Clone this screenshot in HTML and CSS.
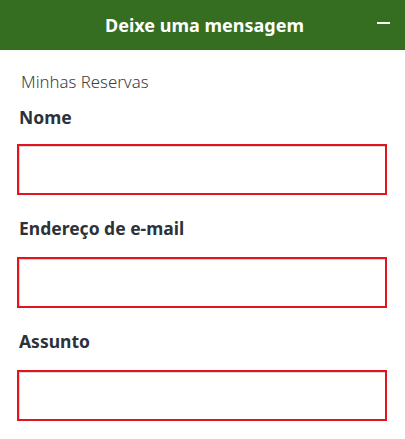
FILE: index.html
```html
<!DOCTYPE html>
<html lang="pt">
<head>
<meta charset="utf-8">
<link rel="stylesheet" href="styles.css">
</head>
<body>
<div class="widget">
  <header class="head">
    <span class="title">Deixe uma mensagem</span>
    <span class="toggle" aria-label="Minimizar"></span>
  </header>
  <form class="form">
    <p class="sub">Minhas Reservas</p>
    <label class="field">
      <span class="lbl">Nome</span>
      <input class="inp" type="text">
    </label>
    <label class="field">
      <span class="lbl">Endereço de e-mail</span>
      <input class="inp" type="email">
    </label>
    <label class="field">
      <span class="lbl">Assunto</span>
      <input class="inp" type="text">
    </label>
  </form>
</div>
</body>
</html>
```

FILE: styles.css
```css
* { box-sizing: border-box; }
html, body { margin: 0; padding: 0; background: #fff; }
body { font-family: "Segoe UI", "Noto Sans", "Open Sans", sans-serif; overflow: hidden; }
.widget { width: 405px; }
.head {
  height: 50px;
  background: #366e21;
  display: flex;
  align-items: center;
  justify-content: center;
  position: relative;
}
.title { color: #fff; font-weight: 700; font-size: 18px; line-height: 24px; margin-left: 4px; }
.toggle {
  position: absolute;
  right: 15px;
  top: 22px;
  width: 13px;
  height: 2px;
  background: #fff;
}
.form { padding: 20px 18px 0 17px; display: flex; flex-direction: column; }
.sub { margin: 0 0 0 4px; font-size: 16.8px; font-weight: 300; color: #3a3f45; line-height: 24px; }
.field { display: flex; flex-direction: column; margin-top: 11px; }
.field + .field { margin-top: 21px; }
.lbl { font-size: 17.5px; font-weight: 700; color: #2b323b; line-height: 24px; margin-left: 2px; margin-bottom: 15px; }
.field + .field .lbl { margin-bottom: 17px; }
.inp {
  display: block;
  width: 370px;
  height: 51px;
  border: 2px solid #e3141f;
  box-shadow: inset 1px 1px 0 #d8d8d8;
  background: #fff;
  outline: none;
  margin: 0;
}
```
